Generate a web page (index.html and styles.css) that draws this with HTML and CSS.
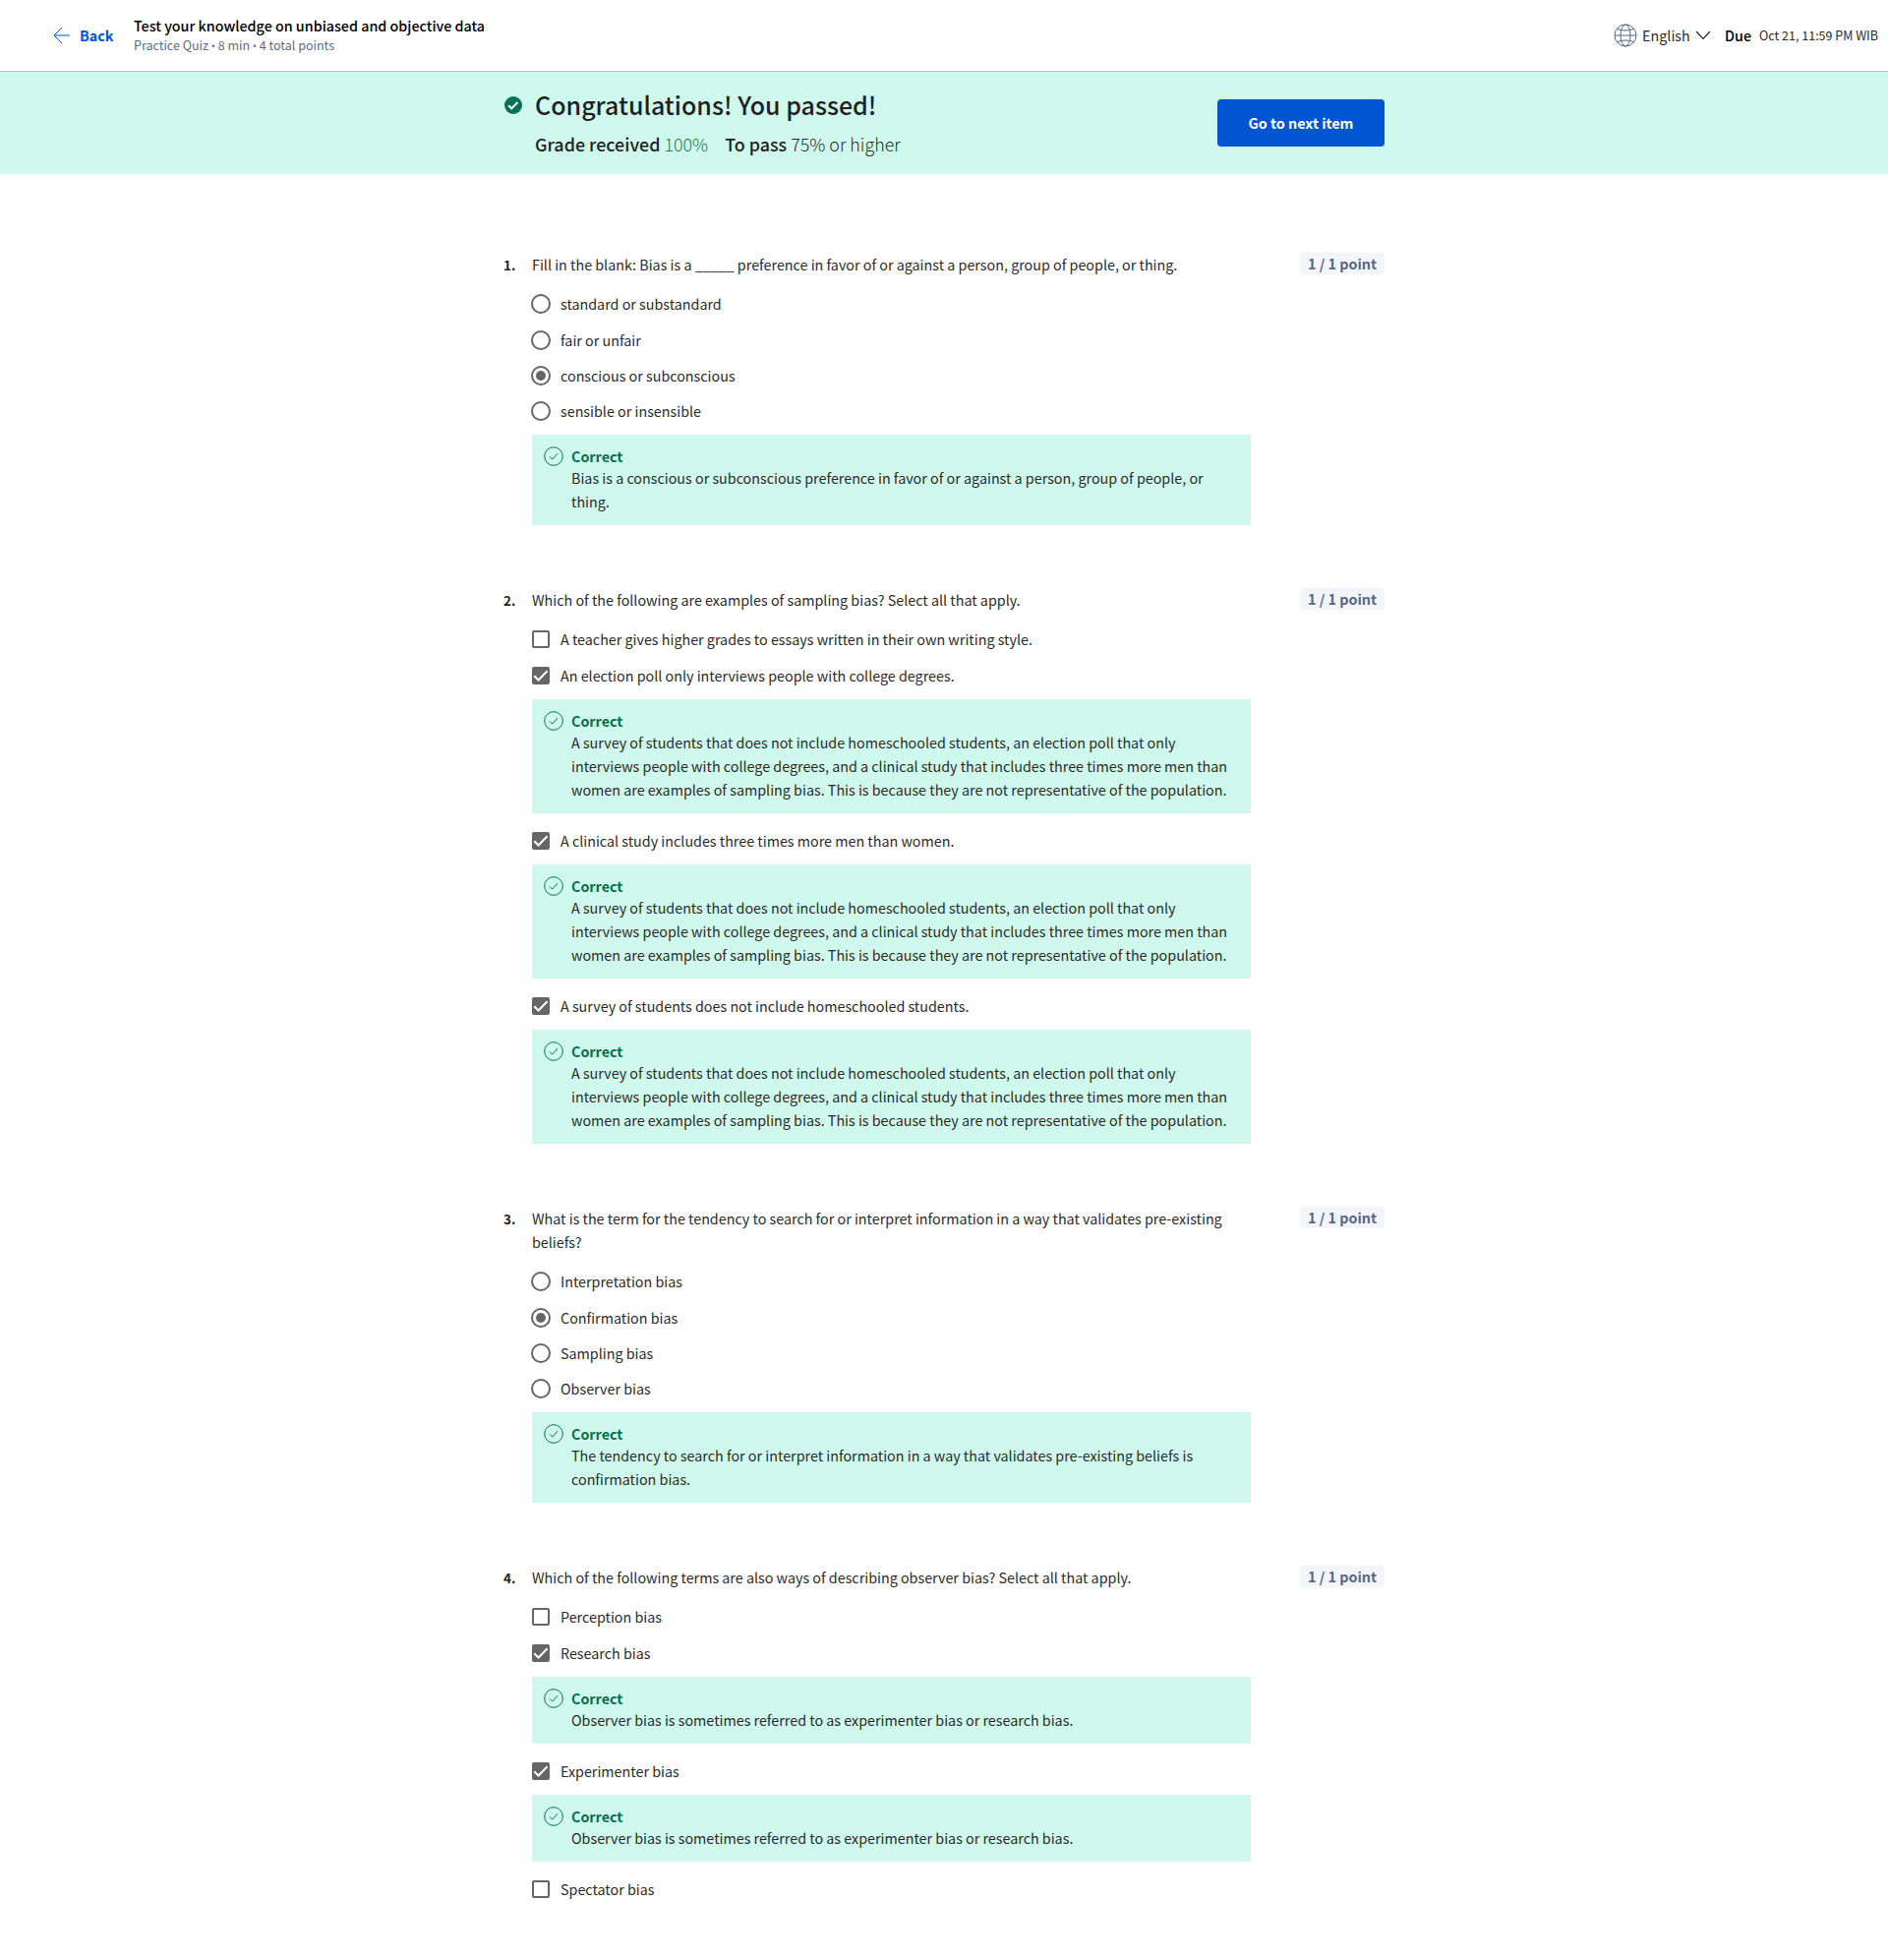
FILE: index.html
```html
<!DOCTYPE html>
<html lang="en">
<head>
<meta charset="utf-8">
<title>Test your knowledge on unbiased and objective data</title>
<link rel="stylesheet" href="styles.css">
</head>
<body>
<svg class="defs" width="0" height="0" aria-hidden="true">
  <symbol id="ok" viewBox="0 0 20 20"><circle cx="10" cy="10" r="9.3"/><path d="M6 10.4l2.7 2.7 5.4-6"/></symbol>
  <symbol id="tick" viewBox="0 0 18 18"><path d="M2.3 9.2l4.3 4.3 9-9.2"/></symbol>
</svg>
<header class="topbar">
  <a class="back"><svg width="18" height="18" viewBox="0 0 18 18"><path d="M17 9H1.2M9 1L1 9l8 8"/></svg><span>Back</span></a>
  <div class="heading">
    <h1>Test your knowledge on unbiased and objective data</h1>
    <p>Practice Quiz <span class="dot">•</span> 8 min <span class="dot">•</span> 4 total points</p>
  </div>
  <div class="language">
    <svg class="globe" width="24" height="24" viewBox="0 0 24 24"><circle cx="12" cy="12" r="11"/><ellipse cx="12" cy="12" rx="5" ry="11"/><path d="M1 12h22M3.4 5.3Q12 8.8 20.6 5.3M3.4 18.7Q12 15.2 20.6 18.7"/></svg>
    <span>English</span>
    <svg class="chevron" width="16" height="10" viewBox="0 0 16 10"><path d="M1 1l7 7.5L15 1"/></svg>
  </div>
  <div class="due"><b>Due</b><span>Oct 21, 11:59 PM WIB</span></div>
</header>
<section class="banner">
  <div class="banner-inner">
    <svg class="passed" width="18" height="18" viewBox="0 0 18 18"><circle cx="9" cy="9" r="9"/><path d="M4.2 9.3l3 3 6.3-6.3"/></svg>
    <div class="result">
      <h2>Congratulations! You passed!</h2>
      <p class="grades"><span><b>Grade received</b> <i>100%</i></span><span><b>To pass</b> 75% or higher</span></p>
    </div>
    <button class="next"><span>Go to next item</span></button>
  </div>
</section>
<main class="quiz">
  <section class="question">
    <div class="number">1.</div>
    <div class="body">
      <p class="prompt">Fill in the blank: Bias is a _____ preference in favor of or against a person, group of people, or thing.</p>
      <div class="option"><i class="radio"></i><span>standard or substandard</span></div>
      <div class="option"><i class="radio"></i><span>fair or unfair</span></div>
      <div class="option"><i class="radio on"></i><span>conscious or subconscious</span></div>
      <div class="option"><i class="radio"></i><span>sensible or insensible</span></div>
      <div class="feedback"><svg width="20" height="20"><use href="#ok"/></svg><div><b>Correct</b><p>Bias is a conscious or subconscious preference in favor of or against a person, group of people, or<br>thing.</p></div></div>
    </div>
    <div class="points"><span>1 / 1 point</span></div>
  </section>
  <section class="question">
    <div class="number">2.</div>
    <div class="body">
      <p class="prompt">Which of the following are examples of sampling bias? Select all that apply.</p>
      <div class="option"><i class="check"></i><span>A teacher gives higher grades to essays written in their own writing style.</span></div>
      <div class="option"><i class="check on"><svg width="18" height="18"><use href="#tick"/></svg></i><span>An election poll only interviews people with college degrees.</span></div>
      <div class="feedback"><svg width="20" height="20"><use href="#ok"/></svg><div><b>Correct</b><p>A survey of students that does not include homeschooled students, an election poll that only<br>interviews people with college degrees, and a clinical study that includes three times more men than<br>women are examples of sampling bias. This is because they are not representative of the population.</p></div></div>
      <div class="option"><i class="check on"><svg width="18" height="18"><use href="#tick"/></svg></i><span>A clinical study includes three times more men than women.</span></div>
      <div class="feedback"><svg width="20" height="20"><use href="#ok"/></svg><div><b>Correct</b><p>A survey of students that does not include homeschooled students, an election poll that only<br>interviews people with college degrees, and a clinical study that includes three times more men than<br>women are examples of sampling bias. This is because they are not representative of the population.</p></div></div>
      <div class="option"><i class="check on"><svg width="18" height="18"><use href="#tick"/></svg></i><span>A survey of students does not include homeschooled students.</span></div>
      <div class="feedback"><svg width="20" height="20"><use href="#ok"/></svg><div><b>Correct</b><p>A survey of students that does not include homeschooled students, an election poll that only<br>interviews people with college degrees, and a clinical study that includes three times more men than<br>women are examples of sampling bias. This is because they are not representative of the population.</p></div></div>
    </div>
    <div class="points"><span>1 / 1 point</span></div>
  </section>
  <section class="question">
    <div class="number">3.</div>
    <div class="body">
      <p class="prompt">What is the term for the tendency to search for or interpret information in a way that validates pre-existing<br>beliefs?</p>
      <div class="option"><i class="radio"></i><span>Interpretation bias</span></div>
      <div class="option"><i class="radio on"></i><span>Confirmation bias</span></div>
      <div class="option"><i class="radio"></i><span>Sampling bias</span></div>
      <div class="option"><i class="radio"></i><span>Observer bias</span></div>
      <div class="feedback"><svg width="20" height="20"><use href="#ok"/></svg><div><b>Correct</b><p>The tendency to search for or interpret information in a way that validates pre-existing beliefs is<br>confirmation bias.</p></div></div>
    </div>
    <div class="points"><span>1 / 1 point</span></div>
  </section>
  <section class="question">
    <div class="number">4.</div>
    <div class="body">
      <p class="prompt">Which of the following terms are also ways of describing observer bias? Select all that apply.</p>
      <div class="option"><i class="check"></i><span>Perception bias</span></div>
      <div class="option"><i class="check on"><svg width="18" height="18"><use href="#tick"/></svg></i><span>Research bias</span></div>
      <div class="feedback"><svg width="20" height="20"><use href="#ok"/></svg><div><b>Correct</b><p>Observer bias is sometimes referred to as experimenter bias or research bias.</p></div></div>
      <div class="option"><i class="check on"><svg width="18" height="18"><use href="#tick"/></svg></i><span>Experimenter bias</span></div>
      <div class="feedback"><svg width="20" height="20"><use href="#ok"/></svg><div><b>Correct</b><p>Observer bias is sometimes referred to as experimenter bias or research bias.</p></div></div>
      <div class="option"><i class="check"></i><span>Spectator bias</span></div>
    </div>
    <div class="points"><span>1 / 1 point</span></div>
  </section>
</main>
</body>
</html>
```
FILE: styles.css
```css
* { box-sizing: border-box; margin: 0; padding: 0; }
body {
  font-family: "Noto Sans CJK SC", "Noto Sans", sans-serif;
  font-size: 14.32px;
  line-height: 24px;
  color: #2b2b2b;
  background: #fff;
  min-height: 1993px;
}
svg { display: block; flex: none; fill: none; }
.defs { position: absolute; }
b { font-weight: 700; }
i { font-style: normal; }
p, span, b { white-space: nowrap; }

.topbar {
  display: flex;
  align-items: center;
  height: 73px;
  padding: 0 10px 0 54px;
  border-bottom: 1px solid #bbb;
}
.back { display: flex; align-items: center; gap: 9px; width: 82px; color: #0056d2; font-weight: 700; }
.back svg { stroke: #0056d2; stroke-width: 1; }
.heading { flex: 1; padding-bottom: 2px; }
h1 { font-size: 14.3px; font-weight: 500; line-height: 22px; color: #000; white-space: nowrap; }
.heading p { font-size: 12.5px; line-height: 18px; color: #5f6b8a; }
.dot { font-family: "Open Sans", sans-serif; font-size: 11px; line-height: 1; }
.language { display: flex; align-items: center; gap: 5px; width: 113px; }
.globe { stroke: #56648a; stroke-width: 1; }
.chevron { stroke: #1f1f1f; stroke-width: 1.1; }
.due { display: flex; align-items: center; gap: 8px; }
.due b { font-weight: 500; color: #000; }
.due span { font-size: 12.5px; }

.banner { height: 104px; background: #cff9ec; }
.banner-inner { display: flex; align-items: flex-start; width: 896px; margin: 0 auto; }
.passed { margin: 25px 13px 0 1px; fill: #087051; stroke: #fff; stroke-width: 2; }
.passed circle { stroke: none; }
.passed path { fill: none; }
.result { flex: 1; padding-top: 13px; }
h2 { font-size: 25px; line-height: 40px; font-weight: 500; color: #1f1f1f; }
.grades { display: flex; gap: 17px; padding-top: 1px; font-size: 17.9px; font-weight: 300; line-height: 38px; }
.grades b { font-weight: 500; color: #1f1f1f; }
.grades i { color: #1d7c50; }
.next {
  width: 170px;
  height: 48px;
  margin-top: 28px;
  border: 0;
  border-radius: 4px;
  background: #0056d2;
  color: #fff;
  font: 700 14.32px/24px "Noto Sans CJK SC", "Noto Sans", sans-serif;
}

.quiz { display: flex; flex-direction: column; gap: 65px; width: 896px; margin: 0 auto; padding-top: 80px; }
.question { display: flex; }
.question + .question { margin-top: -1px; }
.number { width: 29px; font-size: 13.5px; font-weight: 700; color: #1f1f1f; }
.body { width: 731px; }
.prompt { margin-bottom: 10px; }
.option { display: flex; align-items: center; gap: 11px; height: 36px; }
.prompt + .option { margin-bottom: 1px; }
.radio { display: grid; place-items: center; width: 20px; height: 20px; margin: 0 -1px; border: 2px solid #666; border-radius: 50%; }
.radio.on::after { content: ""; width: 10px; height: 10px; border-radius: 50%; background: #666; }
.check { width: 18px; height: 18px; border: 2px solid #666; border-radius: 2px; }
.check.on { border: 0; background: #666; stroke: #fff; stroke-width: 2; }
.feedback { display: flex; gap: 8px; margin-top: 6px; padding: 11px 12px 12px; background: #cff9ec; }
.feedback + .option { margin-top: 10px; }
.feedback svg { margin-top: 1px; stroke: #087051; stroke-width: 1; }
.feedback b { display: block; line-height: 21px; color: #087051; }
.points { flex: 1; display: flex; justify-content: flex-end; align-items: flex-start; }
.points span { width: 86px; height: 22px; border-radius: 4px; background: #f2f5fa; color: #5b6785; font-weight: 700; line-height: 22px; text-align: center; }
```
